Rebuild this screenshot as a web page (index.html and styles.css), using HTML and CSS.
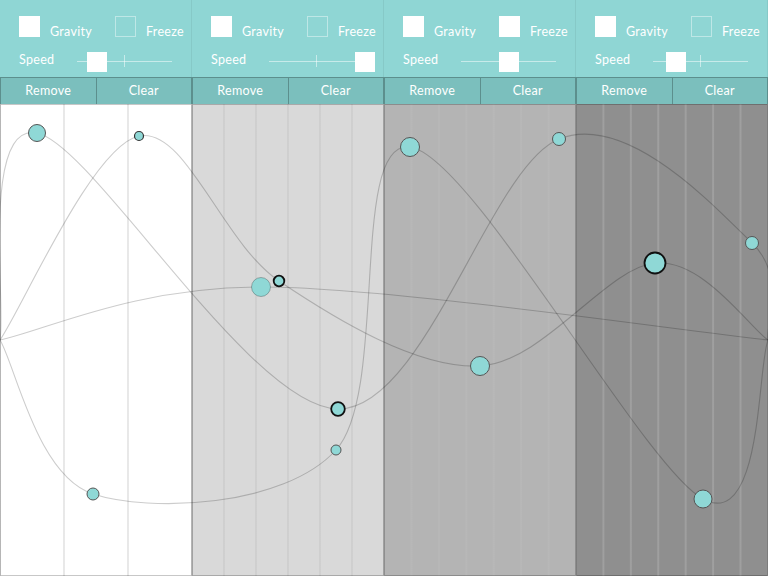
FILE: index.html
```html
<!DOCTYPE html>
<html lang="en">
<head>
<meta charset="utf-8">
<title>Tracks</title>
<link rel="stylesheet" href="styles.css">
</head>
<body>
<div class="app">
  <section class="col">
    <div class="panel">
      <div class="checks">
        <label class="check"><span class="box"></span><span class="check-text">Gravity</span></label>
        <label class="check"><span class="box off"></span><span class="check-text">Freeze</span></label>
      </div>
      <div class="speed">
        <span class="speed-label">Speed</span>
        <div class="slider"><span class="thumb" style="left:10px"></span></div>
      </div>
    </div>
    <div class="buttons"><button class="btn">Remove</button><button class="btn">Clear</button></div>
    <div class="canvas c1"></div>
  </section>
  <section class="col">
    <div class="panel">
      <div class="checks">
        <label class="check"><span class="box"></span><span class="check-text">Gravity</span></label>
        <label class="check"><span class="box off"></span><span class="check-text">Freeze</span></label>
      </div>
      <div class="speed">
        <span class="speed-label">Speed</span>
        <div class="slider"><span class="thumb" style="left:86px"></span></div>
      </div>
    </div>
    <div class="buttons"><button class="btn">Remove</button><button class="btn">Clear</button></div>
    <div class="canvas c2"></div>
  </section>
  <section class="col">
    <div class="panel">
      <div class="checks">
        <label class="check"><span class="box"></span><span class="check-text">Gravity</span></label>
        <label class="check"><span class="box"></span><span class="check-text">Freeze</span></label>
      </div>
      <div class="speed">
        <span class="speed-label">Speed</span>
        <div class="slider"><span class="thumb" style="left:38px"></span></div>
      </div>
    </div>
    <div class="buttons"><button class="btn">Remove</button><button class="btn">Clear</button></div>
    <div class="canvas c3"></div>
  </section>
  <section class="col">
    <div class="panel">
      <div class="checks">
        <label class="check"><span class="box"></span><span class="check-text">Gravity</span></label>
        <label class="check"><span class="box off"></span><span class="check-text">Freeze</span></label>
      </div>
      <div class="speed">
        <span class="speed-label">Speed</span>
        <div class="slider"><span class="thumb" style="left:13px"></span></div>
      </div>
    </div>
    <div class="buttons"><button class="btn">Remove</button><button class="btn">Clear</button></div>
    <div class="canvas c4"></div>
  </section>

  <svg class="curves" width="768" height="472" viewBox="0 104 768 472" xmlns="http://www.w3.org/2000/svg">
    <g class="paths">
      <path d="M0,340 C6.2,305.5 -19.3,121.5 37,133 C93.3,144.5 251,408 338,409 C425,410 490,166.7 559,139 C628,111.3 717.2,209.5 752,243 C786.8,276.5 765.3,323.8 768,340"/>
      <path d="M0,340 C23.2,306 92.5,145.8 139,136 C185.5,126.2 222.2,242.7 279,281 C335.8,319.3 417.3,369 480,366 C542.7,363 607,267.3 655,263 C703,258.7 749.2,327.2 768,340"/>
      <path d="M0,340 C15.5,365.7 37,475.7 93,494 C149,512.3 283.2,507.8 336,450 C388.8,392.2 348.8,138.8 410,147 C471.2,155.2 643.3,466.8 703,499 C762.7,531.2 757.2,366.5 768,340"/>
      <path d="M0,340 C43.5,331.2 133,287 261,287 C389,287 683.5,331.2 768,340"/>
    </g>
    <g class="dots">
      <circle cx="37" cy="133" r="8.5"/>
      <circle class="dark" cx="139" cy="136" r="4.5"/>
      <circle class="faint" cx="261" cy="287" r="9.5"/>
      <circle class="sel" cx="279" cy="281" r="5.3"/>
      <circle class="sel" cx="338" cy="409" r="6.8"/>
      <circle cx="336" cy="450" r="5"/>
      <circle cx="93" cy="494" r="6"/>
      <circle cx="410" cy="147" r="9.5"/>
      <circle cx="559" cy="139" r="6.5"/>
      <circle cx="480" cy="366" r="9.5"/>
      <circle class="sel" cx="655" cy="263" r="10.5"/>
      <circle cx="752" cy="243" r="6.5"/>
      <circle cx="703" cy="499" r="9"/>
    </g>
  </svg>
</div>
</body>
</html>
```
FILE: styles.css
```css
* { box-sizing: border-box; }

html, body {
  margin: 0;
  padding: 0;
}

body {
  width: 768px;
  height: 576px;
  overflow: hidden;
  background: #fff;
  color: #fff;
  font-family: Lato, "Open Sans", sans-serif;
  font-size: 12.5px;
}

.app {
  position: relative;
  display: flex;
  width: 768px;
  height: 576px;
}

.col {
  width: 192px;
  display: flex;
  flex-direction: column;
}

.panel {
  height: 77px;
  background: #8fd6d4;
  padding: 16px 0 0 19px;
  border-right: 1px solid rgba(0, 0, 0, 0.06);
}

.checks {
  display: flex;
}

.check {
  flex: none;
  display: flex;
  align-items: flex-end;
  gap: 10px;
  width: 96px;
}

.box {
  flex: none;
  width: 21px;
  height: 21px;
  background: #fff;
}

.box.off {
  background: transparent;
  border: 1px solid rgba(255, 255, 255, 0.42);
}

.check-text {
  line-height: 14px;
  margin-bottom: -2px;
  letter-spacing: 0.3px;
}

.speed {
  display: flex;
  height: 20px;
  margin-top: 15px;
}

.speed-label {
  flex: none;
  width: 58px;
  line-height: 14px;
  margin-top: 1px;
  letter-spacing: 0.3px;
}

.slider {
  flex: none;
  position: relative;
  width: 95px;
  background: linear-gradient(rgba(255, 255, 255, 0.5), rgba(255, 255, 255, 0.5)) no-repeat 0 9px / 100% 1px;
}

.slider::before {
  content: "";
  position: absolute;
  left: 47px;
  top: 3px;
  width: 1px;
  height: 12px;
  background: rgba(255, 255, 255, 0.5);
}

.thumb {
  position: absolute;
  top: 0;
  width: 20px;
  height: 20px;
  background: #fff;
}

.buttons {
  display: flex;
  height: 27px;
  background: #7bbfbd;
  border-top: 1px solid rgba(0, 0, 0, 0.25);
}

.btn {
  flex: 1;
  margin: 0;
  padding: 0 0 1px;
  border: 0;
  border-left: 1px solid rgba(0, 0, 0, 0.25);
  background: transparent;
  color: #fff;
  font: inherit;
  letter-spacing: 0.3px;
}

.btn:last-child {
  border-right: 1px solid rgba(0, 0, 0, 0.25);
}

.canvas {
  flex: 1;
  border: 1px solid rgba(0, 0, 0, 0.22);
  background-image: linear-gradient(to right, rgba(190, 190, 190, 0.35) 2px, transparent 2px);
  background-origin: border-box;
  background-position: -1px 0;
}

.c1 { background-color: #ffffff; background-size: calc(100% / 3) 100%; }
.c2 { background-color: #d9d9d9; background-size: calc(100% / 6) 100%; }
.c3 { background-color: #b4b4b4; background-size: calc(100% / 7) 100%; }
.c4 { background-color: #8f8f8f; background-size: calc(100% / 7) 100%; }

.curves {
  position: absolute;
  left: 0;
  top: 104px;
  pointer-events: none;
}

.paths path {
  fill: none;
  stroke: rgba(0, 0, 0, 0.2);
  stroke-width: 1.1;
}

.dots circle {
  fill: #8fd8d6;
  stroke: #555;
  stroke-width: 1;
}

.dots circle.dark {
  stroke: #333;
  stroke-width: 1.2;
}

.dots circle.faint {
  stroke: rgba(0, 0, 0, 0.25);
}

.dots circle.sel {
  stroke: #111;
  stroke-width: 1.8;
}
```
